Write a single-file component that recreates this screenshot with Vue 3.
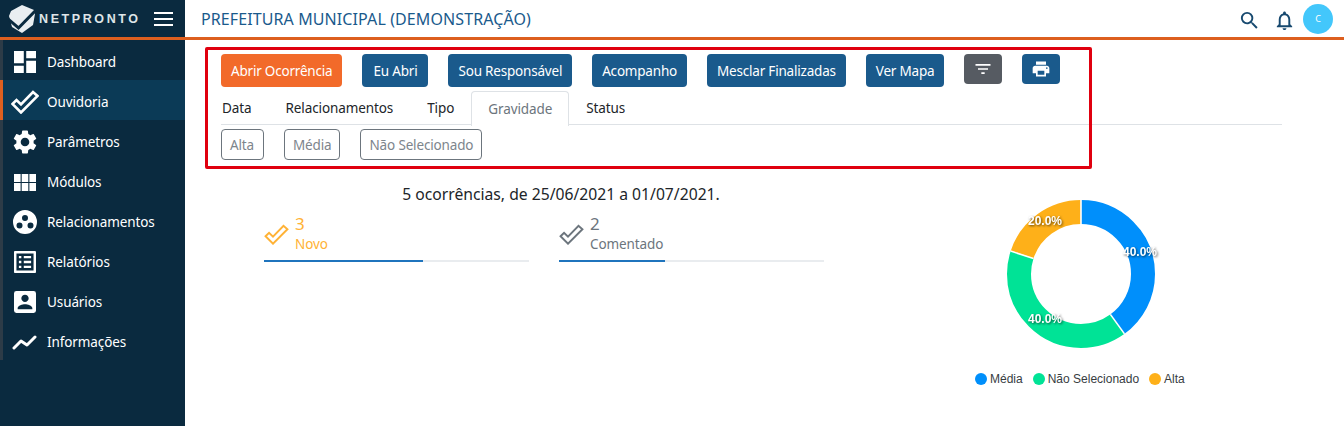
<script setup>
const menu = [
  { label: 'Dashboard', icon: 'dashboard' },
  { label: 'Ouvidoria', icon: 'check', active: true },
  { label: 'Parâmetros', icon: 'gear' },
  { label: 'Módulos', icon: 'modules' },
  { label: 'Relacionamentos', icon: 'bubbles' },
  { label: 'Relatórios', icon: 'list' },
  { label: 'Usuários', icon: 'user' },
  { label: 'Informações', icon: 'chart' },
]
const actions = ['Eu Abri', 'Sou Responsável', 'Acompanho', 'Mesclar Finalizadas', 'Ver Mapa']
const tabs = ['Data', 'Relacionamentos', 'Tipo', 'Gravidade', 'Status']
const chips = ['Alta', 'Média', 'Não Selecionado']
const stats = [
  { n: 3, label: 'Novo', pct: 60, tone: 'amber' },
  { n: 2, label: 'Comentado', pct: 40, tone: 'grey' },
]

// donut: r 62 with a 24 stroke, 40/40/20 clockwise from the top
const R = 62
const C = 2 * Math.PI * R
const slices = [
  { pct: 40, start: 0, color: '#008ffb' },
  { pct: 40, start: 40, color: '#00e396' },
  { pct: 20, start: 80, color: '#feb019' },
]
const labels = [
  { x: 133, y: 56, t: '40.0%' },
  { x: 38, y: 123, t: '40.0%' },
  { x: 38, y: 25, t: '20.0%' },
]
const legend = [
  { t: 'Média', color: '#008ffb' },
  { t: 'Não Selecionado', color: '#00e396' },
  { t: 'Alta', color: '#feb019' },
]
</script>

<template>
  <div class="page">
    <header class="topbar">
      <div class="brand">
        <svg class="logo" viewBox="0 0 28 30" width="28" height="30">
          <path fill="#e9eef1" d="M14 1 L26 6 L27 10 L25 21 L14 29 L4 23 L1 12 L3 7 Z" />
          <path fill="none" stroke="#0a2a3f" stroke-width="3" d="M-1 14 L10.5 24 L29 5" />
        </svg>
        <span class="brand-name">NETPRONTO</span>
        <button class="burger" type="button"><i></i><i></i><i></i></button>
      </div>
      <h1 class="title">PREFEITURA MUNICIPAL (DEMONSTRAÇÃO)</h1>
      <div class="top-icons">
        <svg class="ic-search" viewBox="0 0 24 24" width="23" height="23"><path fill="#17496f" d="M15.5 14h-.79l-.28-.27A6.47 6.47 0 0 0 16 9.5 6.5 6.5 0 1 0 9.5 16c1.61 0 3.09-.59 4.23-1.57l.27.28v.79l5 4.99L20.49 19l-4.99-5zm-6 0C7.01 14 5 11.99 5 9.5S7.01 5 9.5 5 14 7.01 14 9.5 11.99 14 9.5 14z" /></svg>
        <svg class="ic-bell" viewBox="0 0 24 24" width="23" height="23"><path fill="#17496f" d="M12 22c1.1 0 2-.9 2-2h-4c0 1.1.9 2 2 2zm6-6v-5c0-3.07-1.63-5.64-4.5-6.32V4c0-.83-.67-1.5-1.5-1.5s-1.5.67-1.5 1.5v.68C7.64 5.36 6 7.92 6 11v5l-2 2v1h16v-1l-2-2zm-2 1H8v-6c0-2.48 1.51-4.5 4-4.5s4 2.02 4 4.5v6z" /></svg>
        <span class="avatar">C</span>
      </div>
    </header>

    <div class="body">
      <nav class="sidebar">
        <a v-for="m in menu" :key="m.label" class="nav-item" :class="{ active: m.active }">
          <span class="nav-icon">
            <svg v-if="m.icon === 'dashboard'" viewBox="3 3 18 18" width="22" height="22"><path fill="#fff" d="M3 13h8V3H3v10zm0 8h8v-6H3v6zm10 0h8V11h-8v10zm0-18v6h8V3h-8z" /></svg>
            <svg v-else-if="m.icon === 'check'" viewBox="0 0 28 24" width="28" height="24"><path fill="none" stroke="#fff" stroke-width="2.6" d="M1.5 14 L5.5 10 L10 14.5 L22 2 L26.5 6 L10 22.5 Z" /></svg>
            <svg v-else-if="m.icon === 'gear'" viewBox="2 2 20 20" width="24" height="24"><path fill="#fff" d="M19.14 12.94c.04-.3.06-.61.06-.94 0-.32-.02-.64-.07-.94l2.03-1.58a.49.49 0 0 0 .12-.61l-1.92-3.32a.488.488 0 0 0-.59-.22l-2.39.96c-.5-.38-1.03-.7-1.62-.94l-.36-2.54a.484.484 0 0 0-.48-.41h-3.84c-.24 0-.43.17-.47.41l-.36 2.54c-.59.24-1.13.57-1.62.94l-2.39-.96c-.22-.08-.47 0-.59.22L2.74 8.87c-.12.21-.08.47.12.61l2.03 1.58c-.05.3-.09.63-.09.94s.02.64.07.94l-2.03 1.58a.49.49 0 0 0-.12.61l1.92 3.32c.12.22.37.29.59.22l2.39-.96c.5.38 1.03.7 1.62.94l.36 2.54c.05.24.24.41.48.41h3.84c.24 0 .44-.17.47-.41l.36-2.54c.59-.24 1.13-.56 1.62-.94l2.39.96c.22.08.47 0 .59-.22l1.92-3.32c.12-.22.07-.47-.12-.61l-2.01-1.58zM12 15.6c-1.98 0-3.6-1.62-3.6-3.6s1.62-3.6 3.6-3.6 3.6 1.62 3.6 3.6-1.62 3.6-3.6 3.6z" /></svg>
            <svg v-else-if="m.icon === 'modules'" viewBox="0 0 22 17" width="22" height="17"><path fill="#fff" d="M0 0h6.6v8H0zM7.7 0h6.6v8H7.7zM15.4 0H22v8h-6.6zM0 9h6.6v8H0zM7.7 9h6.6v8H7.7zM15.4 9H22v8h-6.6z" /></svg>
            <svg v-else-if="m.icon === 'bubbles'" viewBox="0 0 24 24" width="24" height="24"><path fill="#fff" fill-rule="evenodd" d="M12 0a12 12 0 1 0 0 24 12 12 0 0 0 0-24zM12 5a3 3 0 1 1 0 6 3 3 0 0 1 0-6zM6.5 12.5a3 3 0 1 1 0 6 3 3 0 0 1 0-6zM17.5 12.5a3 3 0 1 1 0 6 3 3 0 0 1 0-6z" /></svg>
            <svg v-else-if="m.icon === 'list'" viewBox="3 3 18 18" width="22" height="22"><path fill="#fff" d="M19 5v14H5V5h14m1.1-2H3.9c-.5 0-.9.4-.9.9v16.2c0 .4.4.9.9.9h16.2c.4 0 .9-.5.9-.9V3.9c0-.5-.5-.9-.9-.9zM11 7h6v2h-6V7zm0 4h6v2h-6v-2zm0 4h6v2h-6v-2zM7 7h2v2H7V7zm0 4h2v2H7v-2zm0 4h2v2H7v-2z" /></svg>
            <svg v-else-if="m.icon === 'user'" viewBox="3 3 18 18" width="22" height="22"><path fill="#fff" d="M3 5v14a2 2 0 0 0 2 2h14a2 2 0 0 0 2-2V5a2 2 0 0 0-2-2H5a2 2 0 0 0-2 2zm12 4c0 1.66-1.34 3-3 3s-3-1.34-3-3 1.34-3 3-3 3 1.34 3 3zm-9 8c0-2 4-3.1 6-3.1s6 1.1 6 3.1v1H6v-1z" /></svg>
            <svg v-else viewBox="0 0 26 18" width="26" height="18"><path fill="none" stroke="#fff" stroke-width="3" stroke-linecap="round" stroke-linejoin="round" d="M2 15 L9 8 L15 12 L23 4" /></svg>
          </span>
          <span>{{ m.label }}</span>
        </a>
      </nav>

      <main class="content">
        <div class="actions">
          <button class="btn orange" type="button">Abrir Ocorrência</button>
          <button v-for="a in actions" :key="a" class="btn blue" type="button">{{ a }}</button>
          <button class="btn icon grey" type="button">
            <svg viewBox="0 0 24 24" width="20" height="20"><path fill="#fff" d="M10 18h4v-2h-4v2zM3 6v2h18V6H3zm3 7h12v-2H6v2z" /></svg>
          </button>
          <button class="btn icon blue" type="button">
            <svg viewBox="0 0 24 24" width="20" height="20"><path fill="#fff" d="M19 8H5c-1.66 0-3 1.34-3 3v6h4v4h12v-4h4v-6c0-1.66-1.34-3-3-3zm-3 11H8v-5h8v5zm3-7c-.55 0-1-.45-1-1s.45-1 1-1 1 .45 1 1-.45 1-1 1zm-1-9H6v4h12V3z" /></svg>
          </button>
        </div>

        <div class="tabs">
          <span v-for="t in tabs" :key="t" class="tab" :class="{ current: t === 'Gravidade' }">{{ t }}</span>
        </div>

        <div class="chips">
          <span v-for="c in chips" :key="c" class="chip">{{ c }}</span>
        </div>

        <div class="lower">
          <section class="summary">
            <p class="period">5 ocorrências, de 25/06/2021 a 01/07/2021.</p>
            <div class="stats">
              <div v-for="s in stats" :key="s.label" class="stat" :class="s.tone">
                <div class="stat-head">
                  <svg viewBox="0 0 28 24" width="25" height="21"><path fill="none" stroke="currentColor" stroke-width="2.2" d="M1.5 14 L5.5 10 L10 14.5 L22 2 L26.5 6 L10 22.5 Z" /></svg>
                  <div>
                    <div class="stat-n">{{ s.n }}</div>
                    <div class="stat-label">{{ s.label }}</div>
                  </div>
                </div>
                <div class="bar"><div class="bar-fill" :style="{ width: s.pct + '%' }"></div></div>
              </div>
            </div>
          </section>

          <section class="chart">
            <svg class="donut" viewBox="0 0 148 148" width="148" height="148">
              <g transform="rotate(-90 74 74)">
                <circle
                  v-for="s in slices"
                  :key="s.color"
                  cx="74"
                  cy="74"
                  :r="R"
                  fill="none"
                  :stroke="s.color"
                  stroke-width="24"
                  :stroke-dasharray="`${(s.pct / 100) * C} ${C}`"
                  :stroke-dashoffset="`${-(s.start / 100) * C}`"
                />
              </g>
              <g stroke="#fff" stroke-width="1.6">
                <line x1="74" y1="0" x2="74" y2="26" />
                <line x1="103.4" y1="114.4" x2="117.5" y2="133.9" />
                <line x1="26.4" y1="58.5" x2="3.6" y2="51.1" />
              </g>
              <text v-for="l in labels" :key="l.x + '-' + l.y" class="donut-label" :x="l.x" :y="l.y" text-anchor="middle">{{ l.t }}</text>
            </svg>
            <div class="legend">
              <span v-for="l in legend" :key="l.t" class="legend-item">
                <i :style="{ background: l.color }"></i>{{ l.t }}
              </span>
            </div>
          </section>
        </div>

        <div class="highlight"></div>
      </main>
    </div>
  </div>
</template>

<style>
html, body {
  margin: 0;
  background: #fff;
}
</style>

<style scoped>
.page {
  width: 1344px;
  height: 426px;
  overflow: hidden;
  font-family: "Noto Sans", sans-serif;
  font-size: 13.5px;
  letter-spacing: -0.1px;
  color: #212529;
}
.topbar {
  display: flex;
  align-items: center;
  height: 37px;
  border-bottom: 3px solid #dd5f1f;
  box-sizing: content-box;
}
.brand {
  display: flex;
  align-items: center;
  width: 185px;
  height: 37px;
  padding-left: 8px;
  box-sizing: border-box;
  background: #0a2a3f;
  flex: none;
}
.logo {
  flex: none;
  margin-top: 1px;
}
.brand-name {
  margin-left: 3px;
  width: 107px;
  font-family: "Liberation Sans", sans-serif;
  font-size: 12.5px;
  font-weight: 700;
  letter-spacing: 2.6px;
  color: #dfe5e8;
  white-space: nowrap;
}
.burger {
  display: flex;
  flex-direction: column;
  gap: 4px;
  margin-left: 8px;
  padding: 0;
  border: none;
  background: none;
  width: 19px;
}
.burger i {
  display: block;
  height: 2px;
  background: #fff;
}
.title {
  flex: 1;
  margin: 0 0 0 16px;
  font-size: 16px;
  font-weight: 400;
  letter-spacing: 0.1px;
  color: #1a5a8c;
  white-space: nowrap;
}
.top-icons {
  display: flex;
  align-items: center;
  padding-right: 11px;
}
.top-icons svg {
  margin-top: 3px;
}
.ic-search {
  margin-right: 12px;
}
.ic-bell {
  margin-right: 7px;
}
.avatar {
  display: flex;
  align-items: center;
  justify-content: center;
  width: 30px;
  height: 30px;
  border-radius: 50%;
  background: #43c7fb;
  color: #fff;
  font-size: 9px;
}
.body {
  display: flex;
  height: 386px;
}
.sidebar {
  flex: none;
  width: 185px;
  background: #0a2a3f;
}
.nav-item {
  display: flex;
  align-items: center;
  height: 40px;
  padding-top: 4px;
  color: #fff;
  border-left: 3px solid #2c3b47;
  box-sizing: border-box;
}
.nav-item.active {
  background: #0b3a56;
  border-left-color: #dd5f1f;
}
.nav-icon {
  display: flex;
  align-items: center;
  justify-content: center;
  width: 30px;
  margin-left: 7px;
  margin-right: 7px;
}
.content {
  position: relative;
  flex: 1;
  padding: 14px 62px 0 36px;
  min-width: 0;
}
.actions {
  display: flex;
  align-items: flex-start;
  gap: 20px;
}
.btn {
  min-width: 66px;
  height: 33px;
  padding: 0 10px;
  border: none;
  border-radius: 4px;
  color: #fff;
  font: inherit;
  letter-spacing: -0.2px;
  white-space: nowrap;
}
.btn.orange {
  background: #f26a2a;
}
.btn.blue {
  background: #1a5a8c;
}
.btn.grey {
  background: #565b62;
}
.btn.icon {
  display: flex;
  align-items: center;
  justify-content: center;
  min-width: 0;
  width: 38px;
  height: 30px;
  padding: 0;
}
.tabs {
  display: flex;
  height: 33px;
  margin-top: 4px;
  border-bottom: 1px solid #dee2e6;
  box-sizing: content-box;
}
.tab {
  display: flex;
  align-items: center;
  padding: 0 16px;
  border: 1px solid transparent;
  border-bottom: none;
  border-radius: 4px 4px 0 0;
}
.tab:first-child {
  padding-left: 0;
}
.tab.current {
  height: 34px;
  background: #fff;
  color: #6c757d;
  border-color: #dee2e6;
}
.chips {
  display: flex;
  gap: 20px;
  margin-top: 4px;
}
.chip {
  display: flex;
  align-items: center;
  min-width: 43px;
  height: 31px;
  padding: 0 8px;
  border: 1px solid #6c757d;
  border-radius: 4px;
  color: #7d858c;
  letter-spacing: -0.15px;
  box-sizing: border-box;
}
.lower {
  display: flex;
  margin-top: 24px;
}
.summary {
  width: 640px;
}
.period {
  margin: 0;
  width: 680px;
  font-size: 15.7px;
  line-height: 20px;
  letter-spacing: 0;
  text-align: center;
}
.stats {
  display: flex;
  gap: 30px;
  margin: 9px 0 0 43px;
}
.stat {
  width: 265px;
}
.stat.amber {
  color: #ffb235;
}
.stat.grey {
  color: #6c757d;
}
.stat-head {
  display: flex;
  align-items: center;
  gap: 6px;
  height: 42px;
}
.stat-n {
  font-size: 17px;
  line-height: 20px;
}
.stat-label {
  line-height: 20px;
}
.bar {
  height: 2px;
  margin-top: 5px;
  background: #e9ecef;
}
.bar-fill {
  height: 100%;
  background: #1f74bd;
}
.chart {
  display: flex;
  flex-direction: column;
  align-items: center;
  margin-left: 116px;
  margin-top: 16px;
}
.donut {
  display: block;
  overflow: visible;
}
.donut-label {
  font-family: "Liberation Sans", sans-serif;
  font-size: 12px;
  font-weight: 700;
  letter-spacing: 0;
  fill: #fff;
  filter: drop-shadow(1px 1px 1px rgba(0, 0, 0, 0.6));
}
.legend {
  display: flex;
  gap: 10px;
  margin: 24px 0 0 -2px;
  font-family: "Liberation Sans", sans-serif;
  font-size: 12px;
  letter-spacing: 0;
  color: #373d3f;
  white-space: nowrap;
}
.legend-item {
  display: flex;
  align-items: center;
  gap: 3px;
}
.legend-item i {
  display: block;
  width: 12px;
  height: 12px;
  border-radius: 50%;
}
.highlight {
  position: absolute;
  left: 20px;
  top: 7px;
  width: 887px;
  height: 122px;
  border: 3px solid #e0000f;
  border-radius: 2px;
  box-sizing: border-box;
  pointer-events: none;
}
</style>
